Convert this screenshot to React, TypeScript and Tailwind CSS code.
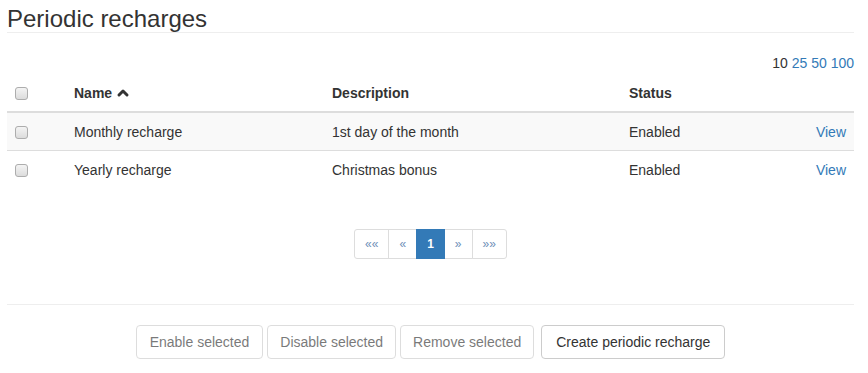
import { ChevronUp } from "lucide-react";

const rows = [
  { name: "Monthly recharge", description: "1st day of the month", status: "Enabled" },
  { name: "Yearly recharge", description: "Christmas bonus", status: "Enabled" },
];

const pages = [
  { label: "««", active: false },
  { label: "«", active: false },
  { label: "1", active: true },
  { label: "»", active: false },
  { label: "»»", active: false },
];

function Checkbox() {
  return (
    <input
      type="checkbox"
      className="m-0 block h-[13px] w-[13px] appearance-none rounded-[3px] border border-[#adadad] bg-gradient-to-b from-[#f4f4f4] to-[#dcdcdc]"
    />
  );
}

export default function App() {
  return (
    <div
      className="min-h-[373px] bg-white pl-[7px] pr-[14px] text-[14px] leading-[20px] text-[#333]"
      style={{ fontFamily: '"Liberation Sans", Arial, sans-serif' }}
    >
      {/* Header */}
      <h3 className="border-b border-[#eee] pt-[6px] text-[24px] leading-[26px] font-normal text-[#333]">
        Periodic recharges
      </h3>

      {/* Page size */}
      <div className="mt-[20px] text-right">
        <span className="text-[#333]">10</span>{" "}
        <a className="text-[#337ab7]">25</a> <a className="text-[#337ab7]">50</a>{" "}
        <a className="text-[#337ab7]">100</a>
      </div>

      {/* Table */}
      <table className="mt-[2px] w-full border-collapse">
        <thead>
          <tr className="border-b-2 border-[#ddd]">
            <th className="w-[59px] p-[8px] text-left align-middle">
              <Checkbox />
            </th>
            <th className="w-[258px] p-[8px] text-left font-bold">
              <span className="inline-flex items-center gap-[3px]">
                Name
                <ChevronUp className="h-[16px] w-[16px]" strokeWidth={4.5} />
              </span>
            </th>
            <th className="w-[297px] p-[8px] text-left font-bold">Description</th>
            <th className="p-[8px] text-left font-bold">Status</th>
            <th className="p-[8px]"></th>
          </tr>
        </thead>
        <tbody>
          {rows.map((row, i) => (
            <tr key={row.name} className={`border-t border-[#ddd] ${i % 2 === 0 ? "bg-[#f9f9f9]" : "bg-white"}`}>
              <td className="px-[8px] pt-[9px] pb-[8px] align-middle">
                <Checkbox />
              </td>
              <td className="px-[8px] pt-[9px] pb-[8px]">{row.name}</td>
              <td className="px-[8px] pt-[9px] pb-[8px]">{row.description}</td>
              <td className="px-[8px] pt-[9px] pb-[8px]">{row.status}</td>
              <td className="px-[8px] pt-[9px] pb-[8px] text-right">
                <a className="text-[#337ab7]">View</a>
              </td>
            </tr>
          ))}
        </tbody>
      </table>

      {/* Pagination */}
      <div className="mt-[41px] flex justify-center">
        <ul className="flex">
          {pages.map((p, i) => (
            <li
              key={i}
              className={`-ml-px flex h-[30px] items-center border px-[10px] text-[12px] leading-[18px] first:ml-0 first:rounded-l-[3px] last:rounded-r-[3px] ${
                p.active
                  ? "z-10 border-[#337ab7] bg-[#337ab7] font-bold text-white"
                  : "border-[#ddd] bg-white text-[#6f8fb8]"
              }`}
            >
              {p.label}
            </li>
          ))}
        </ul>
      </div>

      <hr className="mt-[45px] border-t border-[#eee]" />

      {/* Actions */}
      <div className="mt-[20px] flex justify-center gap-[4px]">
        <button className="h-[34px] rounded-[4px] border border-[#ccc] bg-white px-[13px] text-[14px] text-[#333] opacity-65">
          Enable selected
        </button>
        <button className="h-[34px] rounded-[4px] border border-[#ccc] bg-white px-[12px] text-[14px] text-[#333] opacity-65">
          Disable selected
        </button>
        <button className="h-[34px] rounded-[4px] border border-[#ccc] bg-white px-[12px] text-[14px] text-[#333] opacity-65">
          Remove selected
        </button>
        <button className="ml-[3px] h-[34px] rounded-[4px] border border-[#ccc] bg-white px-[14px] text-[14px] text-[#333]">
          Create periodic recharge
        </button>
      </div>
    </div>
  );
}
